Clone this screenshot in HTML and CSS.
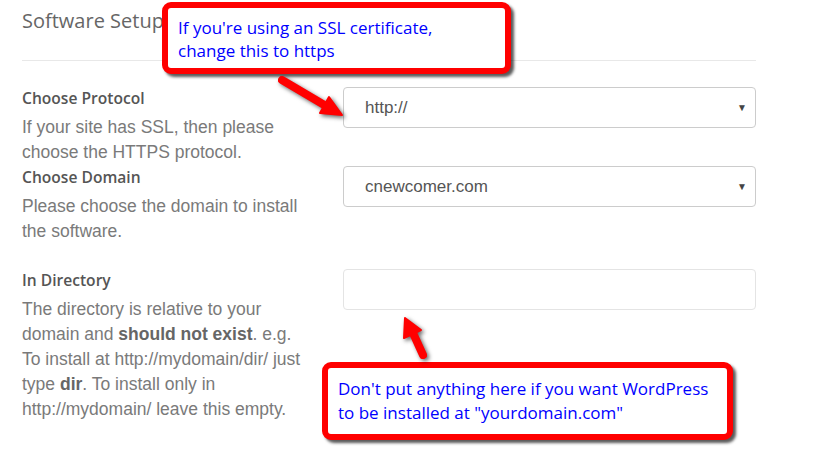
FILE: index.html
```html
<!DOCTYPE html>
<html lang="en">
<head>
    <meta charset="UTF-8">
    <title>Software Setup</title>
    <link rel="stylesheet" href="styles.css">
</head>
<body>
    <div class="setup">
        <h2 class="setup-title">Software Setup</h2>
        <hr class="setup-rule">

        <div class="row row-tight">
            <div class="row-info">
                <div class="row-label">Choose Protocol</div>
                <p class="row-desc">If your site has SSL, then please choose the HTTPS protocol.</p>
            </div>
            <div class="row-field">
                <div class="field select">http://<span class="caret">&#9660;</span></div>
            </div>
        </div>

        <div class="row">
            <div class="row-info">
                <div class="row-label">Choose Domain</div>
                <p class="row-desc">Please choose the domain to install the software.</p>
            </div>
            <div class="row-field">
                <div class="field select">cnewcomer.com<span class="caret">&#9660;</span></div>
            </div>
        </div>

        <div class="row">
            <div class="row-info">
                <div class="row-label">In Directory</div>
                <p class="row-desc">The directory is relative to your domain and <b>should not exist</b>. e.g. To install at http://mydomain/dir/ just type <b>dir</b>. To install only in http://mydomain/ leave this empty.</p>
            </div>
            <div class="row-field">
                <div class="field input"></div>
            </div>
        </div>
    </div>

    <!-- annotations drawn over the form -->
    <div class="callout callout-ssl">If you're using an SSL certificate,<br>change this to https</div>
    <div class="callout callout-dir">Don't put anything here if you want WordPress<br>to be installed at "yourdomain.com"</div>

    <svg class="arrows" width="815" height="473" viewBox="0 0 815 473">
        <g fill="#ff0000" stroke="#ff0000">
            <line x1="282" y1="80" x2="326" y2="106" stroke-width="8" stroke-linecap="round"/>
            <polygon points="342,115 320,113 329,97" stroke-width="2" stroke-linejoin="round"/>
            <line x1="423" y1="355" x2="413" y2="333" stroke-width="8" stroke-linecap="round"/>
            <polygon points="405,318 421,330 404,338" stroke-width="2" stroke-linejoin="round"/>
        </g>
    </svg>
</body>
</html>
```

FILE: styles.css
```css
body {
    margin: 0;
    background: #fff;
    font-family: "Liberation Sans", Arial, sans-serif;
}

.setup {
    width: 734px;
    padding: 0 0 20px 22px;
}
.setup-title {
    margin: 0;
    padding-top: 7px;
    font-family: "Open Sans", sans-serif;
    font-weight: 400;
    font-size: 20px;
    line-height: 28px;
    color: #666;
}
.setup-rule {
    border: none;
    border-top: 1px solid #e8e8e8;
    margin: 25px 0 25px 0;
}

.row {
    display: flex;
    justify-content: space-between;
    margin-bottom: 24px;
}
.row-tight {
    margin-bottom: 0;
}
.row-info {
    width: 290px;
}
.row-label {
    font-family: "Open Sans", sans-serif;
    font-weight: 600;
    font-size: 15.6px;
    line-height: 24px;
    color: #555;
}
.row-desc {
    margin: 5px 0 0 0;
    font-size: 17.5px;
    line-height: 25px;
    color: #7a7a7a;
}
.row-desc b {
    color: #666;
}
.row-field {
    width: 413px;
    padding-top: 1px;
}
.field {
    box-sizing: border-box;
    height: 41px;
    border: 1px solid #ccc;
    border-radius: 4px;
    padding: 0 21px;
    font-size: 17px;
    line-height: 39px;
    color: #555;
}
.select {
    display: flex;
    justify-content: space-between;
}
.caret {
    font-size: 10px;
    color: #444;
    margin-right: -13px;
}
.input {
    border-color: #e4e4e4;
}

.callout {
    position: absolute;
    background: #fff;
    border: 6px solid #ff0000;
    border-radius: 9px;
    box-shadow: 3px 3px 3px rgba(0, 0, 0, 0.65);
    font-family: "Open Sans", sans-serif;
    font-size: 17px;
    color: #0000ff;
    box-sizing: border-box;
}
.callout-ssl {
    left: 162px;
    top: 2px;
    width: 349px;
    height: 72px;
    padding: 8px 10px;
    line-height: 23px;
}
.callout-dir {
    left: 322px;
    top: 362px;
    width: 411px;
    height: 78px;
    padding: 9px 10px;
    line-height: 24px;
}

.arrows {
    position: absolute;
    left: 0;
    top: 0;
    filter: drop-shadow(2px 2px 2px rgba(0, 0, 0, 0.6));
}
```
